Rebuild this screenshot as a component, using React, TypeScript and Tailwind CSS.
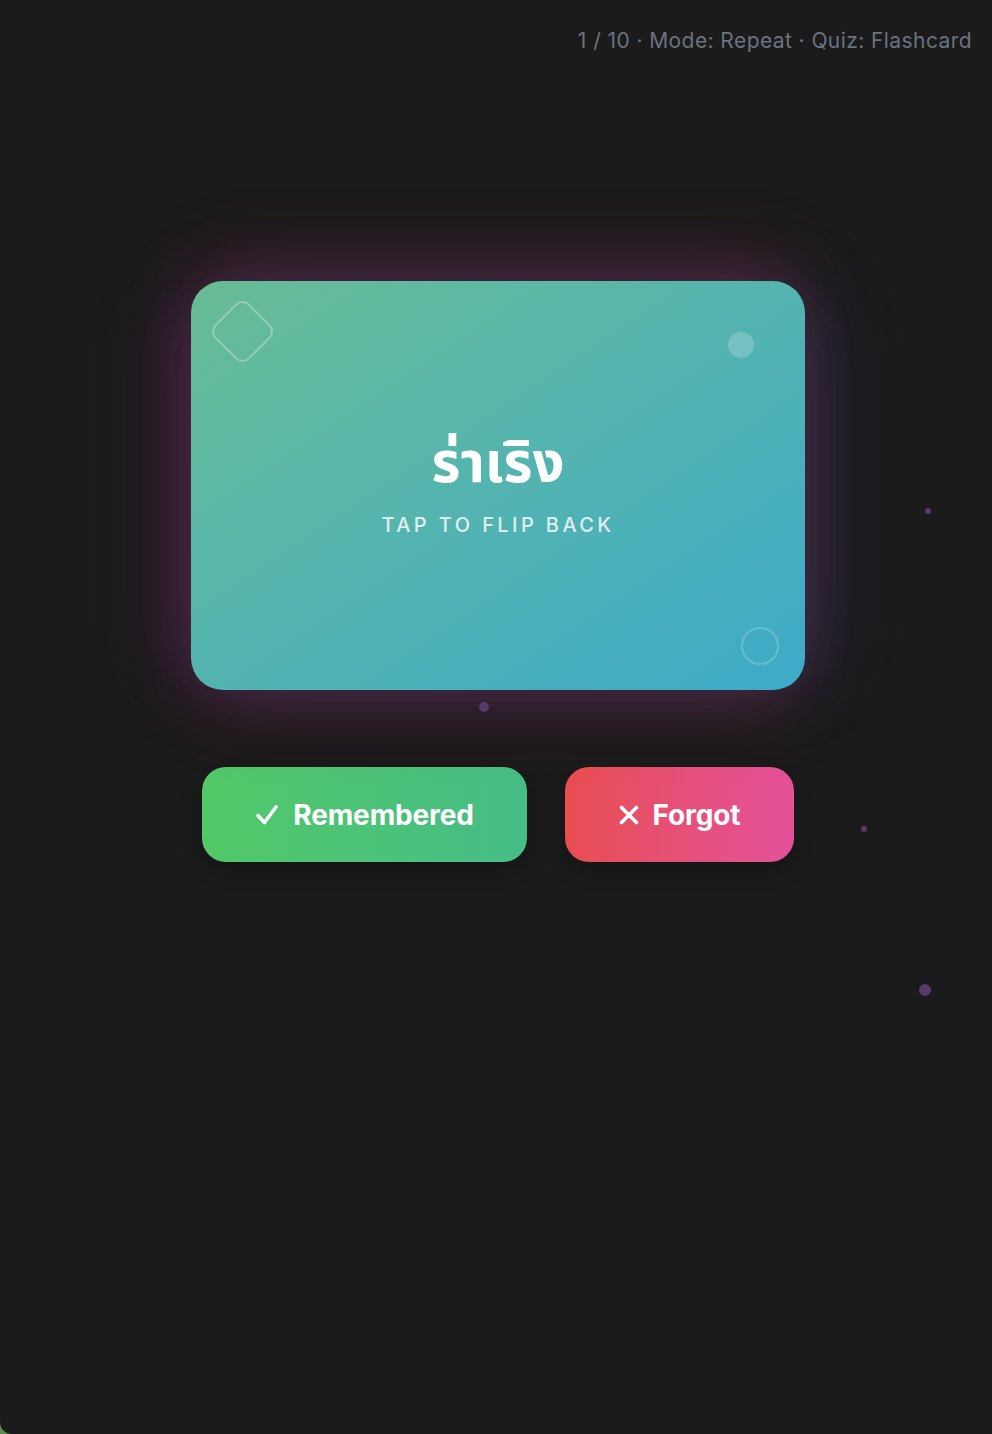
import React from "react";

export default function App() {
  return (
    <div className="w-full h-[1434px] bg-[#5b8c52]">
      <div
        className="relative w-full h-[1434px] bg-[#1b1b1b] rounded-bl-[12px] overflow-hidden"
        style={{ fontFamily: "Inter, 'Noto Sans', Roboto, sans-serif" }}
      >
        <div className="flex justify-end px-5 pt-[27px] text-[21px] leading-[28px] tracking-[0.02em] text-[#6b7280]">
          1 / 10 · Mode: Repeat · Quiz: Flashcard
        </div>

        <div className="flex justify-center mt-[226px]">
          <div className="relative ml-[4px] w-[614px] h-[409px] rounded-[32px] bg-gradient-to-br from-[#68bc94] to-[#3daac9] shadow-[0_-30px_70px_rgba(220,60,80,0.14),-30px_0_70px_rgba(150,70,220,0.15),30px_0_70px_rgba(60,110,240,0.14),0_30px_70px_rgba(220,60,80,0.14)] flex flex-col items-center justify-center">
            <div className="absolute left-[27px] top-[26px] w-[49px] h-[49px] rotate-45 rounded-[10px] border-2 border-white/30" />
            <div className="absolute left-[537px] top-[51px] w-[26px] h-[26px] rounded-full bg-white/20" />
            <div className="absolute left-[550px] top-[346px] w-[38px] h-[38px] rounded-full border-2 border-white/20" />
            <div
              className="text-white font-bold text-[56px] leading-[64px]"
              style={{ fontFamily: "'Noto Sans Thai', 'Noto Sans', Inter, sans-serif" }}
            >
              ร่าเริง
            </div>
            <div className="mt-[14px] text-white/80 text-[20px] leading-[28px] font-medium tracking-[0.17em]">
              TAP TO FLIP BACK
            </div>
          </div>
        </div>

        <div className="flex justify-center gap-[38px] mt-[77px] ml-[4px]">
          <button className="w-[325px] h-[95px] rounded-[24px] bg-gradient-to-r from-[#52c867] to-[#46bd86] flex items-center justify-center gap-[14px] text-white font-bold text-[28px] shadow-[0_8px_20px_rgba(0,0,0,0.25)]">
            <svg width="24" height="22" viewBox="0 0 24 22" fill="none">
              <path d="M3 11.5 L9.5 18.5 L21 3" stroke="white" strokeWidth="3.6" strokeLinecap="round" strokeLinejoin="round" />
            </svg>
            <span className="tracking-[-0.005em]">Remembered</span>
          </button>
          <button className="w-[229px] h-[95px] rounded-[24px] bg-gradient-to-r from-[#e84d4f] to-[#e4519b] flex items-center justify-center gap-[14px] text-white font-bold text-[28px] shadow-[0_8px_20px_rgba(0,0,0,0.25)]">
            <svg width="20" height="20" viewBox="0 0 20 20" fill="none">
              <path d="M2.5 2.5 L17.5 17.5 M17.5 2.5 L2.5 17.5" stroke="white" strokeWidth="3.6" strokeLinecap="round" />
            </svg>
            <span className="tracking-[-0.005em]">Forgot</span>
          </button>
        </div>

        <div className="absolute left-[925px] top-[508px] w-[6px] h-[6px] rounded-full bg-[#573a66]" />
        <div className="absolute left-[861px] top-[826px] w-[6px] h-[6px] rounded-full bg-[#573a66]" />
        <div className="absolute left-[919px] top-[984px] w-[12px] h-[12px] rounded-full bg-[#573a66]" />
        <div className="absolute left-[479px] top-[702px] w-[10px] h-[10px] rounded-full bg-[#573a66]" />
      </div>
    </div>
  );
}
